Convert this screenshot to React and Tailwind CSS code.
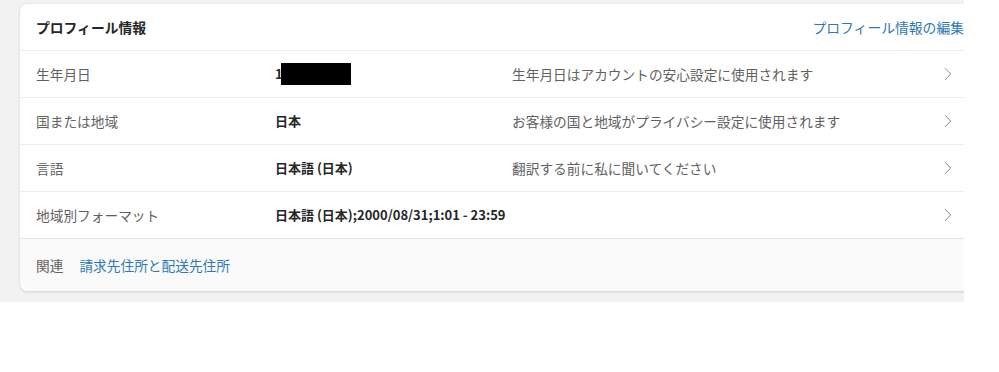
import { ChevronRight } from "lucide-react";

const ROWS = [
  { label: "生年月日", value: "1", masked: true, note: "生年月日はアカウントの安心設定に使用されます" },
  { label: "国または地域", value: "日本", note: "お客様の国と地域がプライバシー設定に使用されます" },
  { label: "言語", value: "日本語 (日本)", note: "翻訳する前に私に聞いてください" },
  { label: "地域別フォーマット", value: "日本語 (日本);2000/08/31;1:01 - 23:59", note: "" },
];

export default function App() {
  return (
    <div
      className="w-[964px] h-[302px] bg-[#f2f2f2] overflow-hidden pl-[20px] pt-[4px]"
      style={{ fontFamily: '"Noto Sans CJK JP", "Noto Sans", sans-serif' }}
    >
      <div className="w-[960px] rounded-l-lg bg-white shadow-[0_1px_3px_rgba(0,0,0,0.15)] overflow-hidden">
        {/* header */}
        <div className="h-[46px] flex items-center justify-between pl-[16px] pr-[16px]">
          <span className="text-[13.8px] font-bold text-[#262626]">プロフィール情報</span>
          <span className="text-[13.8px] text-[#2b79b8]">プロフィール情報の編集</span>
        </div>

        {ROWS.map((r) => (
          <div
            key={r.label}
            className="h-[47px] border-t border-[#ededed] flex items-center text-[13.7px]"
          >
            <span className="w-[255px] pl-[16px] text-[#616161]">{r.label}</span>
            <span className="w-[237px] text-[13px] font-bold text-[#262626] flex items-center">
              {r.value}
              {r.masked && <span className="ml-[-2px] w-[70px] h-[22px] bg-black inline-block" />}
            </span>
            <span className="flex-1 text-[#616161]">{r.note}</span>
            <ChevronRight className="w-[22px] h-[22px] text-[#7a7a7a] mr-[21px]" strokeWidth={1} />
          </div>
        ))}

        {/* footer */}
        <div className="h-[53px] border-t border-[#e6e6e6] bg-[#fafafa] flex items-center pl-[16px] text-[13.7px] gap-[16px]">
          <span className="text-[#616161]">関連</span>
          <span className="text-[#2b79b8]">請求先住所と配送先住所</span>
        </div>
      </div>
    </div>
  );
}
